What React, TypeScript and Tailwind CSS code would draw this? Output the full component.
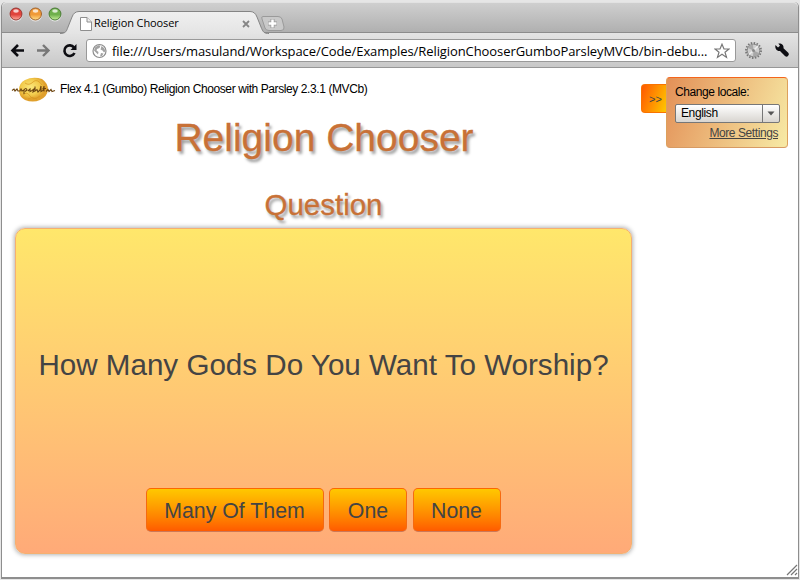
import React from "react";

const lights = [
  { id: "r", edge: "#8c2f2a", mid: "#e0443c", low: "#ffb0a0" },
  { id: "y", edge: "#96561f", mid: "#f09a38", low: "#ffe08a" },
  { id: "g", edge: "#3f6f2c", mid: "#6fb04c", low: "#c8f09a" },
];

function Lights() {
  return (
    <svg width="54" height="16" viewBox="0 0 54 16" className="absolute left-[6.500px] top-[2.500px]">
      {lights.map((l, i) => (
        <g key={l.id} transform={`translate(${i * 19.5 + 7} 8)`}>
          <defs>
            <linearGradient id={l.id} x1="0" y1="0" x2="0" y2="1">
              <stop offset="0" stopColor={l.mid} />
              <stop offset="0.55" stopColor={l.mid} />
              <stop offset="1" stopColor={l.low} />
            </linearGradient>
          </defs>
          <circle cy="0.8" r="6.600" fill="#e8e8e8" />
          <circle r="6" fill={`url(#${l.id})`} stroke={l.edge} strokeWidth="0.900" />
          <ellipse cy="-3" rx="2.8" ry="1.8" fill="#fff" opacity="0.75" />
        </g>
      ))}
    </svg>
  );
}

function TabStrip() {
  return (
    <div className="relative h-[31px] shrink-0 rounded-t-[5px] border-b border-t border-b-[#8c8c8c] border-t-[#e2e2e2] bg-linear-to-b from-[#cfcfcf] to-[#b0b0b0]">
      <Lights />
      <svg width="240" height="24" viewBox="0 0 240 24" className="absolute left-[55px] top-[7px]">
        <defs>
          <linearGradient id="tab" x1="0" y1="0" x2="0" y2="1">
            <stop offset="0" stopColor="#f0f0f0" />
            <stop offset="1" stopColor="#e4e4e4" />
          </linearGradient>
        </defs>
        <path d="M3 24C9 23.5 9.500 21 11 17L15 7Q17 1.500 22 1.500H193Q198 1.500 200 7L204 17C206 22 207 23.500 212 24Z" fill="url(#tab)" />
        <path d="M3 23.500C9 23.500 9.500 21 11 17L15 7Q17 1.500 22 1.500H193Q198 1.500 200 7L204 17C206 22 207 23.500 212 23.500" fill="none" stroke="#858585" />
        <path d="M206 6.500H221Q224 6.500 225 9L227 17Q227.500 20.500 224 20.500H212Q209 20.500 208 18L205 9Q204 6.500 206 6.500Z" fill="#c9c9c9" stroke="#9a9a9a" />
        <path d="M215.500 9v9M211 13.500h9" stroke="#999" strokeWidth="4" />
        <path d="M215.500 9.500v8M211.500 13.500h8" stroke="#fff" strokeWidth="2.500" />
        <path d="M23.500 7.500H30L34.500 12V20.500H23.500Z" fill="#fff" stroke="#8e8e8e" />
        <path d="M30 7.500V12H34.500" fill="#eee" stroke="#8e8e8e" />
        <path d="M186 11L192 17M192 11L186 17" stroke="#858585" strokeWidth="1.800" />
      </svg>
      <div className="absolute left-[92px] top-[12px] whitespace-nowrap font-['Open_Sans',sans-serif] text-[11px] leading-[16px] tracking-[-0.1px] text-black">Religion Chooser</div>
    </div>
  );
}

function Toolbar() {
  return (
    <div className="flex h-[35px] shrink-0 items-center border-b border-[#979797] bg-linear-to-b from-[#e4e4e4] to-[#c8c8c8]">
      <svg width="84" height="34" viewBox="0 0 84 34" fill="none" className="shrink-0">
        <path d="M22 17.500H11M16 12L10.500 17.500L16 23" stroke="#0d0d12" strokeWidth="2.600" />
        <path d="M35 17.500H46M41 12L46.500 17.500L41 23" stroke="#777" strokeWidth="2.400" />
        <path d="M72 14.500A5.300 5.300 0 1 0 72.500 20" stroke="#0d0d12" strokeWidth="2.600" />
        <path d="M74.500 11V17H68.500Z" fill="#0d0d12" />
      </svg>
      <div className="mt-px flex h-[23px] w-[650px] shrink-0 items-center rounded-[3px] border border-[#999] bg-white pl-[5px]">
        <svg width="16" height="16" viewBox="0 0 16 16" className="shrink-0">
          <circle cx="7.500" cy="8" r="6.500" fill="#fff" stroke="#8c8c8c" strokeWidth="1.200" />
          <path d="M3 4.500L6 2.200L8.500 2.500L7.500 5L5 6L4.500 7.500L6.500 9L6 11.500L4.500 10L2 7.500ZM9.500 3L12 5L13.500 8L12 9.500L10.500 7.500L8.500 6.500ZM9 10L11.500 10.500L10 13L8 13.500Z" fill="#a2a2a2" />
        </svg>
        <div className="ml-[4px] w-[600px] shrink-0 whitespace-nowrap font-['Open_Sans',sans-serif] text-[13px] leading-[20px] tracking-[-0.085px] text-black">file:///Users/masuland/Workspace/Code/Examples/ReligionChooserGumboParsleyMVCb/bin-debu...</div>
        <svg width="16" height="16" viewBox="0 0 16 16" className="ml-[2px] shrink-0">
          <path d="M8 1.200L10 6H15L11 9.200L12.500 14.400L8 11.300L3.500 14.400L5 9.200L1 6H6Z" fill="#fff" stroke="#777" strokeWidth="1.200" />
        </svg>
      </div>
      <svg width="60" height="34" viewBox="0 0 60 34" className="shrink-0">
        <circle cx="17.500" cy="17.500" r="7.500" fill="none" stroke="#777" strokeWidth="2" strokeDasharray="1.500 1.440" />
        <circle cx="17.500" cy="17.500" r="6.300" fill="#cfcfcf" stroke="#858585" />
        <path d="M17.500 17.500L12 15A6 6 0 0 1 17 11.500ZM17.500 17.500L23 20A6 6 0 0 1 17 23.500Z" fill="#a8a8a8" />
        <path d="M17.500 17.500L13 21.500M17.500 17.500L22 13" stroke="#eee" strokeWidth="1.500" />
        <circle cx="17.500" cy="17.500" r="1.500" fill="#888" />
        <path d="M39.500 12L42 14.500L44 12.800L42.300 10.500C45.500 10 48 12 47.500 15.300L52.500 20Q53.500 21.500 52 23Q50.500 24.500 49 23L44 18C41 18.500 38.500 15.500 39.500 12Z" fill="#0d0d12" />
      </svg>
    </div>
  );
}

function Brand() {
  return (
    <div className="flex h-[28px] items-center pl-[9px]">
      <svg width="46" height="28" viewBox="0 0 46 28" className="shrink-0">
        <defs>
          <radialGradient id="gold" cx="0.4" cy="0.4">
            <stop offset="0" stopColor="#fbe87c" />
            <stop offset="0.65" stopColor="#f2cb4c" />
            <stop offset="1" stopColor="#e0a02c" />
          </radialGradient>
        </defs>
        <path d="M8 15Q8 8 14 5Q22 1 31 4Q37 8 37 15Q36 22 29 25Q22 28 14 25Q8 22 8 15Z" fill="url(#gold)" />
        <path d="M12 20Q16 16 19 21T29 21M14 8Q18 11 22 7T31 10M17 24Q21 21 26 24" fill="none" stroke="#d79620" strokeWidth="1" opacity="0.7" />
        <path d="M1 15.500L3 14L4 16L6 14L7 16H9L10 14L11 16L13 15V19M13 15Q15 12 16 15L14 16.500M17 16L19 14V16.500L21 15.500L23 14L22 17L24 16V11.500M24 16L26 14.500L27 17L29 15L30 11V16.500L32 15.500L33 11V16.500M31.500 13.500H35M35 16.500L37 14.500L38 16.500L40 14.500L41 16.500L44 15.500" fill="none" stroke="#6d4510" strokeWidth="1.100" />
      </svg>
      <div className="ml-[3px] whitespace-nowrap text-[12px] leading-[16px] tracking-[-0.41px] text-black">Flex 4.1 (Gumbo) Religion Chooser with Parsley 2.3.1 (MVCb)</div>
    </div>
  );
}

function AnswerButton({ label, width }: { label: string; width: string }) {
  return (
    <button className={`${width} h-[44px] shrink-0 whitespace-nowrap rounded-[5px] border border-x-[#f56a10] border-t-[#fa6800] border-b-[#cc7858] bg-linear-to-b from-[#ffc800] to-[#ff5a00] pt-px text-[21.3px] leading-[42px] text-[#444]`}>{label}</button>
  );
}

function LocalePanel() {
  return (
    <div className="mt-[9px] flex items-start">
      <div className="mt-[7px] flex h-[29px] w-[25px] items-center justify-center rounded-l-[4px] border border-r-0 border-[#f97300] bg-[linear-gradient(110deg,#ff5800,#ffc800)] pl-[3px] pt-[2px] text-[11px] text-[#444]">&gt;&gt;</div>
      <div className="h-[71px] w-[122px] rounded-[4px] border border-x-[#dda05c] border-t-[#f4651c] border-b-[#d79a63] bg-[linear-gradient(110deg,#e39057,#f7eaa5)] pl-[8px] pt-[6px]">
        <div className="text-[12px] leading-[16px] tracking-[-0.42px] text-black">Change locale:</div>
        <div className="mt-[4px] flex h-[19px] w-[105px] rounded-[2px] border border-[#777] bg-linear-to-b from-white to-[#d8d5d0]">
          <div className="w-[87px] border-r border-[#777] pl-[5px] text-[12px] leading-[17px] tracking-[-0.38px] text-black">English</div>
          <div className="flex flex-1 items-center justify-center">
            <svg width="8" height="5" viewBox="0 0 8 5"><path d="M0.500 0.500H7.500L4 4.500Z" fill="#555" /></svg>
          </div>
        </div>
        <div className="mt-[2px] w-[103px] text-right text-[12px] leading-[16px] tracking-[-0.42px] text-[#444] underline">More Settings</div>
      </div>
    </div>
  );
}

export default function App() {
  return (
    <div className="h-[580px] w-[800px] overflow-hidden bg-[#e6e6e6] pl-px pt-[2px] font-['Liberation_Sans',Arial,sans-serif]">
      <div className="flex h-[577px] w-[798px] flex-col rounded-t-[5px] border-x border-b-2 border-[#8e8e8e]">
        <TabStrip />
        <Toolbar />
        <div className="relative flex min-h-0 flex-1 bg-white">
          <main className="flex w-[639px] shrink-0 flex-col pt-[7px]">
            <Brand />
            <h1 className="mt-[13px] pl-[5px] text-center text-[39px] leading-[44px] text-[#c87137] [-webkit-text-stroke:0.3px_#c87137] [text-shadow:2px_3px_3px_rgba(0,0,0,0.4)]">Religion Chooser</h1>
            <h2 className="mt-[28px] pl-[4px] text-center text-[29.5px] leading-[34px] text-[#c87137] [-webkit-text-stroke:0.3px_#c87137] [text-shadow:2px_3px_3px_rgba(0,0,0,0.4)]">Question</h2>
            <section className="ml-[13px] mt-[6px] flex h-[326px] w-[617px] flex-col items-center rounded-[10px] border border-[#f5b070] bg-linear-to-b from-[#ffe76b] to-[#ffaa78] shadow-[0_0_4px_1px_rgba(0,0,0,0.3)]">
              <p className="mt-[117px] whitespace-nowrap text-[29.6px] leading-[38px] text-[#444]">How Many Gods Do You Want To Worship?</p>
              <div className="mr-px mt-[104px] flex gap-[5.500px]">
                <AnswerButton label="Many Of Them" width="w-[178px]" />
                <AnswerButton label="One" width="w-[78px]" />
                <AnswerButton label="None" width="w-[88px]" />
              </div>
            </section>
          </main>
          <LocalePanel />
          <svg width="12" height="12" viewBox="0 0 12 12" className="absolute bottom-px right-0">
            <path d="M1 11L11 1M5 11L11 5M9 11L11 9" stroke="#777" strokeWidth="1.200" />
          </svg>
        </div>
      </div>
    </div>
  );
}
